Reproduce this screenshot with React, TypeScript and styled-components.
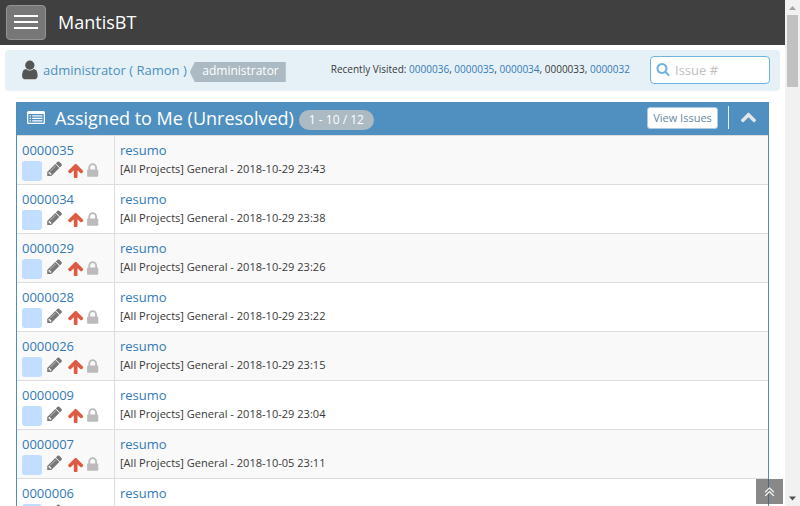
import React from "react";
import styled, { createGlobalStyle } from "styled-components";

const GlobalStyle = createGlobalStyle`
  html, body { margin: 0; height: 100%; overflow: hidden; background: #fff; }
  * { box-sizing: border-box; }
  body { font: 13px/19.5px "Open Sans", sans-serif; color: #393939; }
`;

const Window = styled.div`
  display: flex;
  height: 506px;
  width: 800px;
  overflow: hidden;
`;

const Page = styled.div`
  position: relative;
  flex: 1;
  min-width: 0;
  overflow: hidden;
`;

const Link = styled.a`
  color: #337ab7;
  text-decoration: none;
`;

const Navbar = styled.header`
  display: flex;
  align-items: flex-start;
  height: 45px;
  padding: 5px 6px;
  background: #404040;
`;

const MenuButton = styled.button`
  display: flex;
  flex-direction: column;
  gap: 4px;
  width: 40px;
  height: 35px;
  padding: 9px 7px;
  border: 1px solid #949494;
  border-radius: 4px;
  background: #777;
`;

const MenuBar = styled.span`
  height: 2px;
  width: 24px;
  background: #fff;
`;

const Brand = styled.span`
  margin-left: 12px;
  padding-top: 5px;
  font-size: 18px;
  line-height: 25px;
  color: #fff;
`;

const Breadcrumbs = styled.nav`
  display: flex;
  align-items: flex-start;
  height: 41px;
  margin: 5px 5px 0;
  padding: 6px 10px 0 16px;
  border-radius: 4px;
  background: #e6f1f7;
`;

const UserLink = styled(Link)`
  margin: 5px 0 0 6px;
  color: #4c8fbd;
  white-space: nowrap;
`;

const Access = styled.span`
  width: 96px;
  height: 20px;
  margin: 6px 0 0 3px;
  padding-left: 12.5px;
  font-size: 12px;
  line-height: 18px;
  color: #fff;
  background: #abbac3;
  clip-path: polygon(5px 0, 100% 0, 100% 100%, 5px 100%, 0 50%);
`;

const Recent = styled.div`
  margin: 4px 20px 0 auto;
  font-size: 10px;
  white-space: nowrap;
`;

const SearchBox = styled.label`
  display: flex;
  align-items: center;
  width: 120px;
  height: 28px;
  padding-left: 5px;
  border: 1px solid #6fb3e0;
  border-radius: 4px;
  background: #fff;
`;

const SearchInput = styled.input`
  width: 84px;
  margin-left: 5px;
  padding: 0;
  border: 0;
  outline: 0;
  background: transparent;
  font: 13px "Open Sans", sans-serif;
  &::placeholder { color: #c0c0c0; opacity: 1; }
`;

const Widget = styled.section`
  margin: 11px 16px 0;
  border: solid #4c8fbd;
  border-width: 0 1px;
`;

const WidgetHeader = styled.div`
  display: flex;
  align-items: flex-start;
  height: 33px;
  padding-left: 10px;
  background: #4f90c1;
  color: #fff;
`;

const WidgetTitle = styled.h4`
  margin: 4px 0 0 10px;
  font-size: 18px;
  line-height: 25px;
  font-weight: 400;
  white-space: nowrap;
`;

const Count = styled.span`
  width: 75px;
  height: 20px;
  margin: 8px 0 0 5px;
  border-radius: 10px;
  background: #abbac3;
  text-align: center;
  font-size: 12px;
  line-height: 19px;
`;

const ViewIssues = styled.button`
  width: 71px;
  height: 22px;
  margin: 5px 10px 0 auto;
  padding: 0 0 1px;
  border: 1px solid #abcbe4;
  border-radius: 3px;
  background: #fff;
  color: #6688a6;
  font: 11px/19px "Open Sans", sans-serif;
  white-space: nowrap;
`;

const Divider = styled.span`
  width: 1px;
  height: 23px;
  margin-top: 4px;
  background: #e6eff6;
`;

const Row = styled.article<{ $striped: boolean }>`
  display: grid;
  grid-template-columns: 97px 1fr;
  height: 49px;
  border-top: 1px solid #ddd;
  background: ${(p) => (p.$striped ? "#f9f9f9" : "#fff")};
`;

const IdCell = styled.div`
  padding: 5px 0 0 5px;
`;

const SummaryCell = styled.div`
  padding: 5px 5px 0;
  border-left: 1px solid #ddd;
`;

const Meta = styled.div`
  font-size: 11.05px;
  line-height: 16px;
`;

const Icons = styled.div`
  display: flex;
  align-items: flex-start;
`;

const Status = styled.span`
  width: 20px;
  height: 20px;
  border-radius: 3px;
  background: #c1ddff;
`;

const Icon = styled.svg<{ $size: number; $color: string; $gap?: string }>`
  flex: none;
  display: block;
  width: ${(p) => p.$size}px;
  height: ${(p) => p.$size}px;
  margin: ${(p) => p.$gap ?? "0"};
  fill: ${(p) => p.$color};
`;

const BackToTop = styled.button`
  position: absolute;
  right: 2px;
  bottom: 2px;
  display: flex;
  justify-content: center;
  width: 27px;
  height: 25px;
  padding: 4px 0 0;
  border: 0;
  background: rgba(85, 85, 85, 0.7);
`;

const Scrollbar = styled.div`
  display: flex;
  flex-direction: column;
  justify-content: space-between;
  width: 15px;
  background: #f1f1f1;
`;

const ScrollTop = styled.div`
  display: flex;
  flex-direction: column;
`;

const Thumb = styled.div`
  width: 11px;
  height: 72px;
  margin-left: 2px;
  background: #c1c1c1;
`;

const ScrollArrow = styled.svg`
  display: block;
  width: 15px;
  height: 15px;
`;

const glyphs = {
  user: "M1536 1399q0 109-62.5 187t-150.5 78h-854q-88 0-150.5-78t-62.5-187q0-85 8.5-160.5t31.5-152 58.5-131 94-89 134.5-34.5q131 128 313 128t313-128q76 0 134.5 34.5t94 89 58.5 131 31.5 152 8.5 160.5zm-256-887q0 159-112.5 271.5t-271.5 112.5-271.5-112.5-112.5-271.5 112.5-271.5 271.5-112.5 271.5 112.5 112.5 271.5z",
  search: "M1216 832q0-185-131.5-316.5t-316.5-131.5-316.5 131.5-131.5 316.5 131.5 316.5 316.5 131.5 316.5-131.5 131.5-316.5zm512 832q0 52-38 90t-90 38q-54 0-90-38l-343-342q-179 124-399 124-143 0-273.5-55.5t-225-150-150-225-55.5-273.5 55.5-273.5 150-225 225-150 273.5-55.5 273.5 55.5 225 150 150 225 55.5 273.5q0 220-124 399l343 343q37 37 37 90z",
  pencil: "M491 1536l91-91-235-235-91 91v107h128v128h107zm523-928q0-22-22-22-10 0-17 7l-542 542q-7 7-7 17 0 22 22 22 10 0 17-7l542-542q7-7 7-17zm-54-192l416 416-832 832h-416v-416zm683 96q0 53-37 90l-166 166-416-416 166-165q36-38 90-38 53 0 91 38l235 234q37 39 37 91z",
  arrowUp: "M1675 971q0 51-37 90l-75 75q-38 38-91 38-54 0-90-38l-294-293v704q0 52-37.5 84.5t-90.5 32.5h-128q-53 0-90.5-32.5t-37.5-84.5v-704l-294 293q-36 38-90 38t-90-38l-75-75q-38-38-38-90 0-53 38-91l651-651q35-37 90-37 54 0 91 37l651 651q37 39 37 91z",
  lock: "M640 768h512v-192q0-106-75-181t-181-75-181 75-75 181v192zm832 96v576q0 40-28 68t-68 28h-960q-40 0-68-28t-28-68v-576q0-40 28-68t68-28h32v-192q0-184 132-316t316-132 316 132 132 316v192h32q40 0 68 28t28 68z",
  chevronUp: "M1683 1331l-166 165q-19 19-45 19t-45-19l-531-531-531 531q-19 19-45 19t-45-19l-166-165q-19-19-19-45.5t19-45.5l742-741q19-19 45-19t45 19l742 741q19 19 19 45.5t-19 45.5z",
  doubleUp: "M1395 1312q0 13-10 23l-50 50q-10 10-23 10t-23-10l-393-393-393 393q-10 10-23 10t-23-10l-50-50q-10-10-10-23t10-23l466-466q10-10 23-10t23 10l466 466q10 10 10 23zm0-384q0 13-10 23l-50 50q-10 10-23 10t-23-10l-393-393-393 393q-10 10-23 10t-23-10l-50-50q-10-10-10-23t10-23l466-466q10-10 23-10t23 10l466 466q10 10 10 23z",
};

type GlyphProps = { name: keyof typeof glyphs; size: number; color: string; gap?: string };

function Glyph({ name, size, color, gap }: GlyphProps) {
  return (
    <Icon viewBox="0 0 1792 1792" $size={size} $color={color} $gap={gap} aria-hidden>
      <path d={glyphs[name]} />
    </Icon>
  );
}

function ListIcon() {
  return (
    <Icon viewBox="0 0 18 18" $size={18} $color="#fff" $gap="7px 0 0" aria-hidden>
      <path fillRule="evenodd" d="M1.5 2h15A1.5 1.5 0 0 1 18 3.5v10a1.5 1.5 0 0 1-1.5 1.5h-15A1.5 1.5 0 0 1 0 13.500v-10A1.500 1.500 0 0 1 1.500 2zM1.300 5v8.300q0 .4.4.4h14.600q.4 0 .4-.4V5z" />
      <path d="M2.600 6.200h1.300v1.300H2.600zM5.200 6.200h10.200v1.300H5.200zM2.600 8.700h1.300V10H2.600zM5.200 8.700h10.200V10H5.200zM2.600 11.200h1.300v1.300H2.600zM5.200 11.200h10.200v1.300H5.200z" />
    </Icon>
  );
}

const recent = [
  { id: "0000036", open: true },
  { id: "0000035", open: true },
  { id: "0000034", open: true },
  { id: "0000033", open: false },
  { id: "0000032", open: true },
];

const issues: { id: string; date?: string }[] = [
  { id: "0000035", date: "2018-10-29 23:43" },
  { id: "0000034", date: "2018-10-29 23:38" },
  { id: "0000029", date: "2018-10-29 23:26" },
  { id: "0000028", date: "2018-10-29 23:22" },
  { id: "0000026", date: "2018-10-29 23:15" },
  { id: "0000009", date: "2018-10-29 23:04" },
  { id: "0000007", date: "2018-10-05 23:11" },
  { id: "0000006" },
];

export default function App() {
  return (
    <Window>
      <GlobalStyle />
      <Page>
        <Navbar>
          <MenuButton aria-label="Menu">
            <MenuBar />
            <MenuBar />
            <MenuBar />
          </MenuButton>
          <Brand>MantisBT</Brand>
        </Navbar>
        <Breadcrumbs>
          <Glyph name="user" size={21.7} color="#555" gap="3px -3.700px 0 -2px" />
          <UserLink>administrator ( Ramon )</UserLink>
          <Access>administrator</Access>
          <Recent>
            Recently Visited:{" "}
            {recent.map((r, i) => (
              <React.Fragment key={r.id}>
                {i > 0 && ", "}
                {r.open ? <Link>{r.id}</Link> : r.id}
              </React.Fragment>
            ))}
          </Recent>
          <SearchBox>
            <Glyph name="search" size={14} color="#6fb3e0" gap="0 0 2px" />
            <SearchInput placeholder="Issue #" />
          </SearchBox>
        </Breadcrumbs>
        <Widget>
          <WidgetHeader>
            <ListIcon />
            <WidgetTitle>Assigned to Me (Unresolved)</WidgetTitle>
            <Count>1 - 10 / 12</Count>
            <ViewIssues>View Issues</ViewIssues>
            <Divider />
            <Glyph name="chevronUp" size={17} color="#e4e6e9" gap="6px 11px 0 11px" />
          </WidgetHeader>
          {issues.map((issue, i) => (
            <Row key={issue.id} $striped={i % 2 === 0}>
              <IdCell>
                <Link>{issue.id}</Link>
                <Icons>
                  <Status />
                  <Glyph name="pencil" size={17.33} color="#777" gap="-0.3px 0 0 3.8px" />
                  <Glyph name="arrowUp" size={17.33} color="#dd5a43" gap="1.600px 0 0 3.400px" />
                  <Glyph name="lock" size={17.33} color="#bbb" gap="1.600px 0 0 0.100px" />
                </Icons>
              </IdCell>
              <SummaryCell>
                <Link>resumo</Link>
                {issue.date && <Meta>[All Projects] General - {issue.date}</Meta>}
              </SummaryCell>
            </Row>
          ))}
        </Widget>
        <BackToTop aria-label="Back to top">
          <Glyph name="doubleUp" size={17} color="#eee" />
        </BackToTop>
      </Page>
      <Scrollbar>
        <ScrollTop>
          <ScrollArrow viewBox="0 0 15 15"><path d="M4 10l3.500-4 3.500 4z" fill="#a3a3a3" /></ScrollArrow>
          <Thumb />
        </ScrollTop>
        <ScrollArrow viewBox="0 0 15 15"><path d="M4 5.500l3.500 4 3.500-4z" fill="#505050" /></ScrollArrow>
      </Scrollbar>
    </Window>
  );
}
